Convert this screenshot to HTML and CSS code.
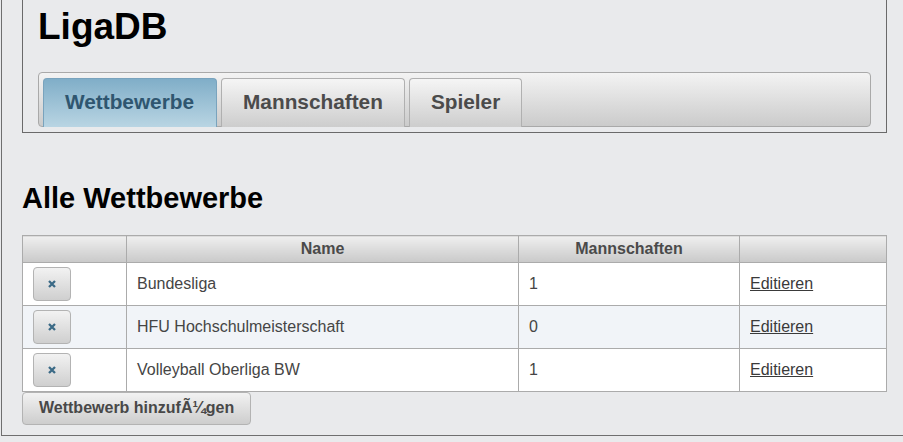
FILE: index.html
```html
<!DOCTYPE html>
<html lang="de">
<head>
<meta charset="utf-8">
<title>LigaDB</title>
<link rel="stylesheet" href="styles.css">
</head>
<body>
<div class="page">
  <div class="header">
    <h1 class="title">LigaDB</h1>
    <ul class="tabs">
      <li class="tab active"><a href="#">Wettbewerbe</a></li>
      <li class="tab"><a href="#">Mannschaften</a></li>
      <li class="tab"><a href="#">Spieler</a></li>
    </ul>
  </div>

  <h2 class="section-title">Alle Wettbewerbe</h2>

  <table class="grid">
    <colgroup>
      <col class="c-del"><col class="c-name"><col class="c-count"><col class="c-edit">
    </colgroup>
    <thead>
      <tr><th></th><th>Name</th><th>Mannschaften</th><th></th></tr>
    </thead>
    <tbody>
      <tr>
        <td><button class="del-btn" type="button"><svg width="8" height="8" viewBox="0 0 8 8"><path d="M1 1L7 7M7 1L1 7" stroke="#3b6a86" stroke-width="2.3" stroke-linecap="butt"/></svg></button></td>
        <td>Bundesliga</td>
        <td>1</td>
        <td><a class="edit" href="#">Editieren</a></td>
      </tr>
      <tr class="odd">
        <td><button class="del-btn" type="button"><svg width="8" height="8" viewBox="0 0 8 8"><path d="M1 1L7 7M7 1L1 7" stroke="#3b6a86" stroke-width="2.3" stroke-linecap="butt"/></svg></button></td>
        <td>HFU Hochschulmeisterschaft</td>
        <td>0</td>
        <td><a class="edit" href="#">Editieren</a></td>
      </tr>
      <tr>
        <td><button class="del-btn" type="button"><svg width="8" height="8" viewBox="0 0 8 8"><path d="M1 1L7 7M7 1L1 7" stroke="#3b6a86" stroke-width="2.3" stroke-linecap="butt"/></svg></button></td>
        <td>Volleyball Oberliga BW</td>
        <td>1</td>
        <td><a class="edit" href="#">Editieren</a></td>
      </tr>
    </tbody>
  </table>
  <button class="add-btn" type="button">Wettbewerb hinzufÃ¼gen</button>
</div>
</body>
</html>
```

FILE: styles.css
```css
html, body {
  margin: 0;
  padding: 0;
  background: #e9eaec;
  overflow: hidden;
}
body {
  font-family: "Liberation Sans", Arial, sans-serif;
  color: #444;
}
.page {
  margin-left: 1px;
  width: 865px;
  padding: 0 20px 10px 20px;
  border: 1px solid #6f6f6f;
  border-top: none;
}
.header {
  border: 1px solid #6a6a6a;
  border-top: none;
  padding: 8px 15px 5px 15px;
}
.title {
  margin: 0;
  font-size: 37px;
  line-height: 37px;
  font-weight: bold;
  color: #000;
}
.tabs {
  list-style: none;
  margin: 27px 0 0 0;
  padding: 5px 4px 0 4px;
  display: flex;
  gap: 4px;
  border: 1px solid #a9a9a9;
  border-radius: 4px;
  background: linear-gradient(#f3f3f3, #cbcbcb);
}
.tab {
  margin-bottom: -1px;
  border: 1px solid #b0b0b0;
  border-bottom: none;
  border-radius: 4px 4px 0 0;
  background: linear-gradient(#f5f5f5, #cdcdcd);
}
.tab a {
  display: block;
  padding: 11px 21px 13px 21px;
  font-size: 20.8px;
  line-height: 24px;
  font-weight: bold;
  color: #4b4b4b;
  text-decoration: none;
}
.tab.active {
  border-color: #79a3bd;
  background: linear-gradient(#80aec8, #b9d5e3);
}
.tab.active a {
  padding-right: 22px;
  color: #2f5670;
}
.section-title {
  margin: 51px 0 22px 0;
  font-size: 29px;
  line-height: 29px;
  font-weight: bold;
  color: #000;
}
.grid {
  width: 864px;
  border-collapse: collapse;
  table-layout: fixed;
  background: #fff;
}
.c-del { width: 104px; }
.c-name { width: 392px; }
.c-count { width: 221px; }
.c-edit { width: 147px; }
.grid th {
  border: 1px solid #ababab;
  padding: 4px 10px;
  font-size: 16px;
  line-height: 18px;
  font-weight: bold;
  color: #4a4a4a;
  text-align: center;
  background: linear-gradient(#efefef, #c9c9c9);
}
.grid td {
  border: 1px solid #ababab;
  padding: 4px 10px;
  font-size: 16px;
  line-height: 18px;
  color: #454545;
  height: 34px;
  vertical-align: middle;
}
.grid tr.odd td {
  background: #f1f4f8;
}
.del-btn {
  display: flex;
  align-items: center;
  justify-content: center;
  width: 38px;
  height: 34px;
  padding: 0;
  border: 1px solid #b3b3b3;
  border-radius: 4px;
  background: linear-gradient(#f2f2f2, #cfcfcf);
}
.edit {
  color: #3a3a3a;
  text-decoration: underline;
}
.add-btn {
  display: block;
  margin: 0;
  padding: 6px 16px 7px 16px;
  border: 1px solid #b3b3b3;
  border-radius: 4px;
  background: linear-gradient(#f2f2f2, #cdcdcd);
  font-family: "Liberation Sans", Arial, sans-serif;
  font-size: 16px;
  line-height: 18px;
  font-weight: bold;
  color: #484848;
}
```
